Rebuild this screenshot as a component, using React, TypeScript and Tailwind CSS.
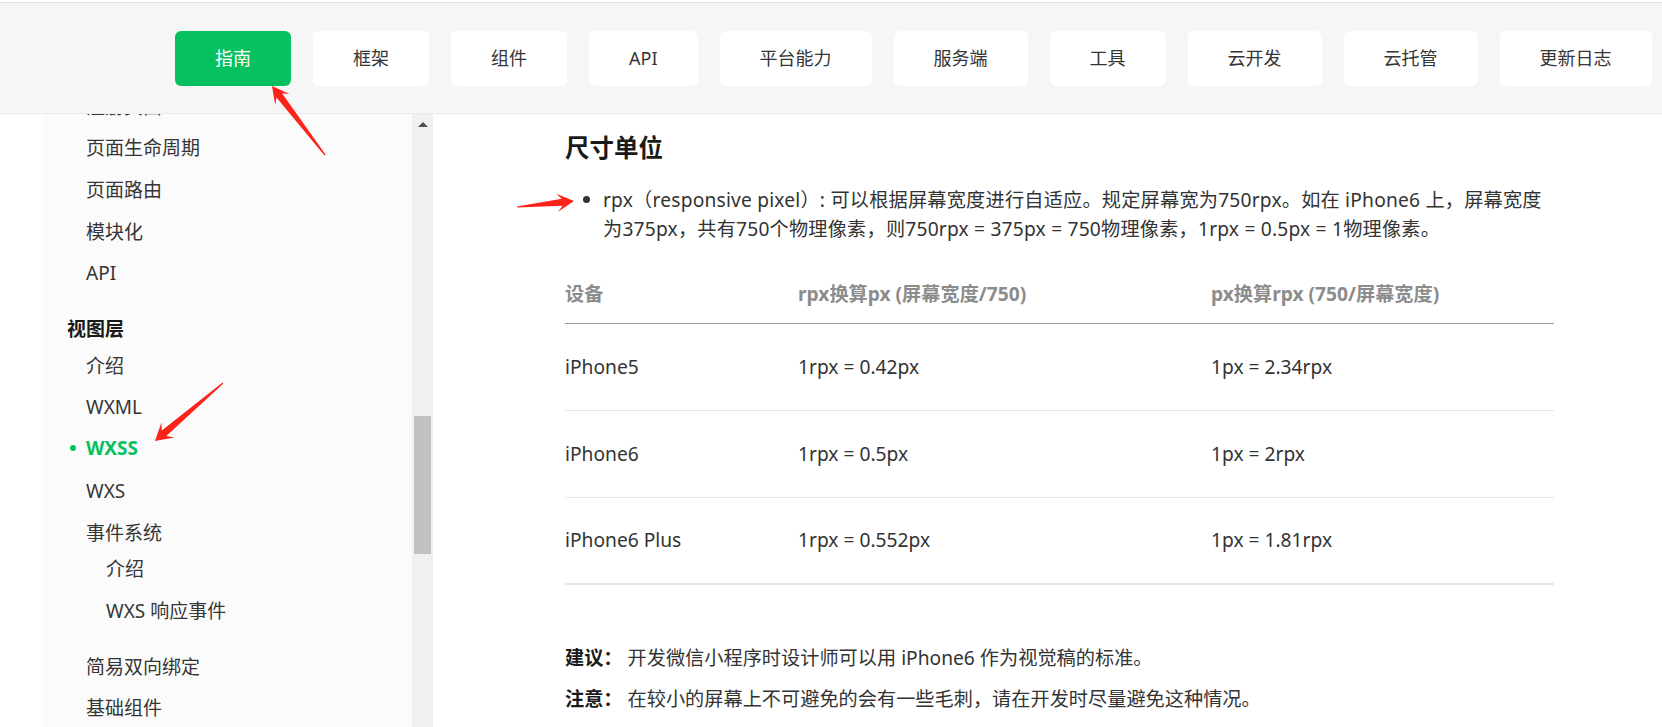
import React from "react";

const navItems = ["指南", "框架", "组件", "API", "平台能力", "服务端", "工具", "云开发", "云托管", "更新日志"];

type SideItem = { t: string; cls: string; kind?: "group" | "active" };

const sideItems: SideItem[] = [
  { t: "注册页面", cls: "mt-[-25px] pl-[86px]" },
  { t: "页面生命周期", cls: "mt-[5px] pl-[86px]" },
  { t: "页面路由", cls: "mt-[6px] pl-[86px]" },
  { t: "模块化", cls: "mt-[6px] pl-[86px]" },
  { t: "API", cls: "mt-[5px] pl-[86px]" },
  { t: "视图层", cls: "mt-[20px] pl-[67px]", kind: "group" },
  { t: "介绍", cls: "mt-[1px] pl-[86px]" },
  { t: "WXML", cls: "mt-[5px] pl-[86px]" },
  { t: "WXSS", cls: "mt-[5px] pl-[70px]", kind: "active" },
  { t: "WXS", cls: "mt-[7px] pl-[86px]" },
  { t: "事件系统", cls: "mt-[6px] pl-[86px]" },
  { t: "介绍", cls: "mt-[0px] pl-[106px]" },
  { t: "WXS 响应事件", cls: "mt-[6px] pl-[106px]" },
  { t: "简易双向绑定", cls: "mt-[20px] pl-[86px]" },
  { t: "基础组件", cls: "mt-[5px] pl-[86px]" },
];

const rows = [
  ["iPhone5", "1rpx = 0.42px", "1px = 2.34rpx"],
  ["iPhone6", "1rpx = 0.5px", "1px = 2rpx"],
  ["iPhone6 Plus", "1rpx = 0.552px", "1px = 1.81rpx"],
];

function arrowPts(tx: number, ty: number, px: number, py: number, L: number, W: number, w: number) {
  const dx = px - tx;
  const dy = py - ty;
  const len = Math.sqrt(dx * dx + dy * dy);
  const ux = dx / len;
  const uy = dy / len;
  const nx = -uy;
  const ny = ux;
  const bx = px - ux * L * 0.7;
  const by = py - uy * L * 0.7;
  const hx = px - ux * L;
  const hy = py - uy * L;
  const pts: [number, number][] = [
    [tx + nx * 0.6, ty + ny * 0.6],
    [bx + nx * w, by + ny * w],
    [hx + nx * W, hy + ny * W],
    [px, py],
    [hx - nx * W, hy - ny * W],
    [bx - nx * w, by - ny * w],
    [tx - nx * 0.6, ty - ny * 0.6],
  ];
  return pts.map((p) => `${p[0].toFixed(1)},${p[1].toFixed(1)}`).join(" ");
}

export default function App() {
  return (
    <div className="relative h-[727px] w-[1662px] overflow-hidden bg-white font-['Noto_Sans','Noto_Sans_CJK_SC',sans-serif] text-[#353535]">
      {/* top strip */}
      <div className="h-[2px] bg-white" />
      <div className="h-px bg-[#e3e3e3]" />
      {/* header */}
      <header className="flex h-[111px] items-start gap-[22px] border-b border-[#ececec] bg-[#f6f6f6] pl-[175px] pt-[28px]">
        {navItems.map((n, i) => (
          <div
            key={n}
            className={
              i === 0
                ? "flex h-[55px] shrink-0 items-center justify-center rounded-[6px] bg-[#07c160] px-[40px] text-[18px] text-white"
                : "flex h-[55px] shrink-0 items-center justify-center rounded-[6px] bg-white px-[40px] text-[18px] text-[#353535]"
            }
          >
            {n}
          </div>
        ))}
      </header>

      {/* body */}
      <div className="flex h-[613px]">
        {/* sidebar */}
        <div className="flex w-[433px] shrink-0">
          <div className="w-[43px] shrink-0 bg-white" />
          <div className="w-[369px] shrink-0 overflow-hidden bg-[#fbfbfb]">
            <div className="ml-[-43px] flex flex-col">
              {sideItems.map((s, i) => (
                <div key={i} className={`flex h-[36px] shrink-0 items-center whitespace-nowrap text-[19px] ${s.cls}`}>
                  {s.kind === "active" ? (
                    <>
                      <span className="h-[6px] w-[6px] rounded-full bg-[#07c160]" />
                      <span className="ml-[10px] font-bold text-[#07c160]">{s.t}</span>
                    </>
                  ) : s.kind === "group" ? (
                    <span className="font-bold text-[#1a1a1a]">{s.t}</span>
                  ) : (
                    <span>{s.t}</span>
                  )}
                </div>
              ))}
            </div>
          </div>
          {/* scrollbar */}
          <div className="flex w-[21px] shrink-0 flex-col items-center bg-[#f0f0f0]">
            <div className="mt-[8px] h-0 w-0 border-x-[5px] border-b-[5px] border-x-transparent border-b-[#505050]" />
            <div className="mt-[289px] h-[138px] w-[17px] bg-[#c1c1c1]" />
          </div>
        </div>

        {/* main */}
        <main className="w-[989px] shrink-0 pl-[132px] pt-[17px] box-content">
          <h1 className="text-[24.5px] font-bold leading-[34px] text-[#1a1a1a]">尺寸单位</h1>
          <div className="mt-[20px] flex">
            <div className="flex h-[29px] w-[38px] shrink-0 items-center pl-[18px]">
              <span className="h-[7px] w-[7px] rounded-full bg-[#333]" />
            </div>
            <p className="whitespace-nowrap text-[19.2px] leading-[29px] tracking-[0.2px] text-[#333]">
              rpx（responsive pixel）: 可以根据屏幕宽度进行自适应。规定屏幕宽为750rpx。如在 iPhone6 上，屏幕宽度
              <br />
              为375px，共有750个物理像素，则750rpx = 375px = 750物理像素，1rpx = 0.5px = 1物理像素。
            </p>
          </div>

          {/* table */}
          <div className="mt-px">
            <div className="grid h-[80px] grid-cols-[233px_413px_1fr] items-end border-b border-[#9a9a9a] pb-[14px] text-[19.2px] font-bold leading-[30px] text-[#8c8c8c]">
              <div>设备</div>
              <div>rpx换算px (屏幕宽度/750)</div>
              <div>px换算rpx (750/屏幕宽度)</div>
            </div>
            {rows.map((r, i) => (
              <div
                key={r[0]}
                className={
                  i === rows.length - 1
                    ? "grid h-[87px] grid-cols-[233px_413px_1fr] items-center border-b-2 border-[#e6e6e6] text-[19.2px] text-[#333]"
                    : "grid h-[87px] grid-cols-[233px_413px_1fr] items-center border-b border-[#e6e6e6] text-[19.2px] text-[#333]"
                }
              >
                <div>{r[0]}</div>
                <div>{r[1]}</div>
                <div>{r[2]}</div>
              </div>
            ))}
          </div>

          <p className="mt-[58px] text-[19.2px] leading-[30px] text-[#333]">
            <span className="font-bold text-[#1a1a1a]">建议：</span> 开发微信小程序时设计师可以用 iPhone6 作为视觉稿的标准。
          </p>
          <p className="mt-[11px] text-[19.2px] leading-[30px] text-[#333]">
            <span className="font-bold text-[#1a1a1a]">注意：</span> 在较小的屏幕上不可避免的会有一些毛刺，请在开发时尽量避免这种情况。
          </p>
        </main>
      </div>

      {/* annotation arrows */}
      <svg className="pointer-events-none absolute left-0 top-0" width="1662" height="727" viewBox="0 0 1662 727">
        <polygon points={arrowPts(325, 155, 272, 86, 17, 9, 3.5)} fill="#ff2219" />
        <polygon points={arrowPts(517, 207, 574, 201, 17, 9, 3.5)} fill="#ff2219" />
        <polygon points={arrowPts(223, 383, 155, 441, 17, 10, 3.5)} fill="#ff2219" />
      </svg>
    </div>
  );
}
